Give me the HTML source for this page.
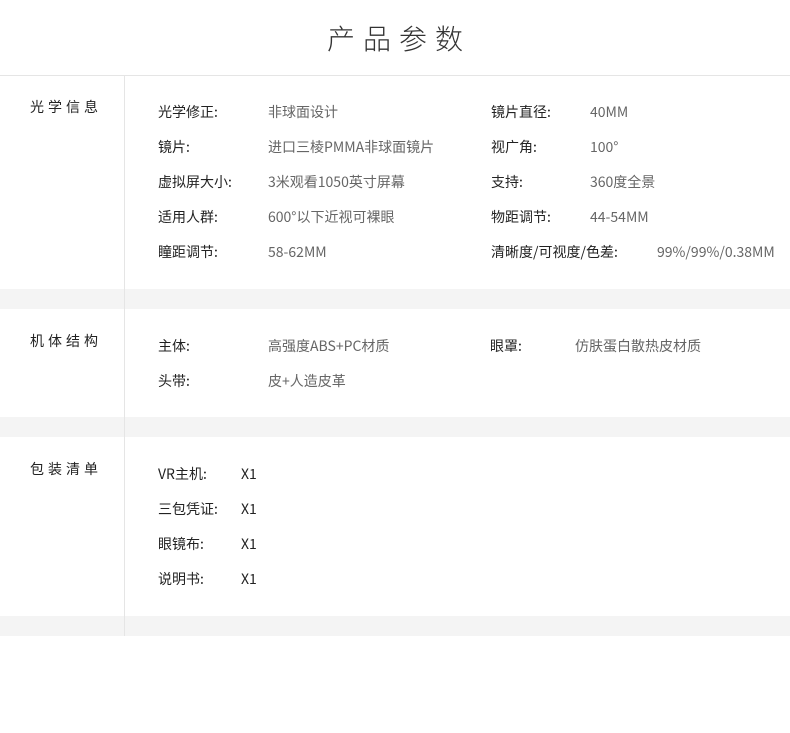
<!DOCTYPE html>
<html><head><meta charset="utf-8"><style>
body{margin:0;width:790px;height:733px;background:#fff;position:relative;overflow:hidden;font-family:"Noto Sans CJK SC",sans-serif;font-size:14px}
.t{position:absolute;white-space:nowrap;line-height:20px}
.l{color:#222}.v{color:#666}
.g{position:absolute;left:0;width:790px;height:20px;background:#f4f4f4}
.s{position:absolute;left:30px;color:#222;letter-spacing:4px;line-height:20px}
</style></head><body>
<div class="t" style="left:0;width:790px;text-align:center;top:20px;font-size:28px;line-height:36px;letter-spacing:8px;color:#333;padding-left:8px;box-sizing:border-box;font-weight:300">产品参数</div>
<div style="position:absolute;left:0;top:75px;width:790px;height:1px;background:#e5e5e5"></div>
<div class="g" style="top:289px"></div><div class="g" style="top:417px"></div><div class="g" style="top:616px"></div>
<div style="position:absolute;left:124px;top:76px;width:1px;height:560px;background:#e5e5e5"></div>
<div class="s" style="top:97px">光学信息</div>
<div class="s" style="top:331px">机体结构</div>
<div class="s" style="top:459px">包装清单</div>

<div class="t l" style="left:158px;top:102px">光学修正:</div><div class="t v" style="left:268px;top:102px">非球面设计</div>
<div class="t l" style="left:158px;top:137px">镜片:</div><div class="t v" style="left:268px;top:137px">进口三棱PMMA非球面镜片</div>
<div class="t l" style="left:158px;top:172px">虚拟屏大小:</div><div class="t v" style="left:268px;top:172px">3米观看1050英寸屏幕</div>
<div class="t l" style="left:158px;top:207px">适用人群:</div><div class="t v" style="left:268px;top:207px">600°以下近视可裸眼</div>
<div class="t l" style="left:158px;top:242px">瞳距调节:</div><div class="t v" style="left:268px;top:242px">58-62MM</div>

<div class="t l" style="left:491px;top:102px">镜片直径:</div><div class="t v" style="left:590px;top:102px">40MM</div>
<div class="t l" style="left:491px;top:137px">视广角:</div><div class="t v" style="left:590px;top:137px">100°</div>
<div class="t l" style="left:491px;top:172px">支持:</div><div class="t v" style="left:590px;top:172px">360度全景</div>
<div class="t l" style="left:491px;top:207px">物距调节:</div><div class="t v" style="left:590px;top:207px">44-54MM</div>
<div class="t l" style="left:491px;top:242px">清晰度/可视度/色差:</div><div class="t v" style="left:657px;top:242px">99%/99%/0.38MM</div>

<div class="t l" style="left:158px;top:336px">主体:</div><div class="t v" style="left:268px;top:336px">高强度ABS+PC材质</div>
<div class="t l" style="left:158px;top:371px">头带:</div><div class="t v" style="left:268px;top:371px">皮+人造皮革</div>
<div class="t l" style="left:490px;top:336px">眼罩:</div><div class="t v" style="left:575px;top:336px">仿肤蛋白散热皮材质</div>

<div class="t l" style="left:158px;top:464px">VR主机:</div><div class="t l" style="left:241px;top:464px">X1</div>
<div class="t l" style="left:158px;top:499px">三包凭证:</div><div class="t l" style="left:241px;top:499px">X1</div>
<div class="t l" style="left:158px;top:534px">眼镜布:</div><div class="t l" style="left:241px;top:534px">X1</div>
<div class="t l" style="left:158px;top:569px">说明书:</div><div class="t l" style="left:241px;top:569px">X1</div>
</body></html>
